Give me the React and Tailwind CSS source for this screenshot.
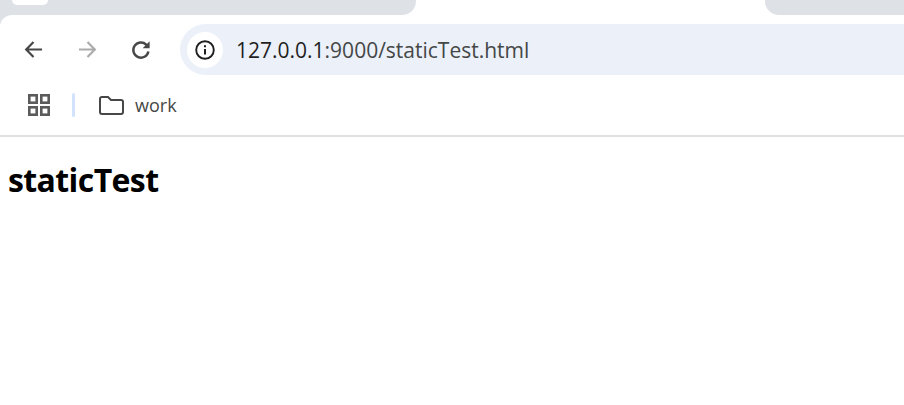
import React from "react";

function BackIcon({ className }) {
  return (
    <svg viewBox="0 0 20 20" className={className} fill="none" stroke="currentColor" strokeWidth="2.3">
      <path d="M19 10H2.5M10 2.2L2.3 10l7.7 7.8" />
    </svg>
  );
}

function ReloadIcon() {
  return (
    <svg viewBox="0 0 20 20" className="w-[20px] h-[20px] text-[#474747]" fill="none" stroke="currentColor" strokeWidth="2.4">
      <path d="M17.4 11.5A7.6 7.6 0 1 1 15.2 4.6L17.4 7" />
      <path d="M18.6 1.2V8.2h-7" fill="currentColor" stroke="none" />
    </svg>
  );
}

export default function App() {
  return (
    <div className="w-[904px] h-[405px] bg-white overflow-hidden font-['Open_Sans',sans-serif]">
      {/* tab strip */}
      <div className="h-[15px] flex justify-between">
        <div className="w-[416px] bg-[#dee1e6] rounded-br-[14px]">
          <div className="ml-[12px] w-[36px] h-[5px] bg-white rounded-b-[10px]" />
        </div>
        <div className="w-[139px] bg-[#dee1e6] rounded-bl-[14px]" />
      </div>

      {/* toolbar */}
      <div className="h-[70px] bg-[#dee1e6]">
        <div className="h-full bg-white rounded-tl-[12px] pt-[9px] flex items-start">
          <div className="h-[51px] w-[180px] flex items-center pl-[24px] shrink-0">
            <BackIcon className="w-[19px] h-[19px] text-[#474747]" />
            <BackIcon className="ml-[35px] w-[19px] h-[19px] text-[#ababab] rotate-180" />
            <div className="ml-[34px]">
              <ReloadIcon />
            </div>
          </div>
          <div className="h-[51px] flex-1 bg-[#ebf0f9] rounded-l-[26px] flex items-center pl-[7px]">
            <div className="w-[36px] h-[36px] rounded-full bg-white flex items-center justify-center shrink-0">
              <svg viewBox="0 0 20 20" className="w-[20px] h-[20px] text-[#1f1f1f]" fill="none" stroke="currentColor">
                <circle cx="10" cy="10" r="8.8" strokeWidth="1.9" />
                <path d="M10 9v5.5" strokeWidth="2" />
                <path d="M10 5.2v2" strokeWidth="2" />
              </svg>
            </div>
            <div className="ml-[13px] text-[21px] leading-[28px] text-[#444746] whitespace-nowrap">
              <span className="text-[#1f1f1f]">127.0.0.1</span>:9000/staticTest.html
            </div>
          </div>
        </div>
      </div>

      {/* bookmarks bar */}
      <div className="h-[52px] border-b-2 border-[#e0e0e0] flex items-start pl-[28px] pt-[8px]">
        <svg viewBox="0 0 22 22" className="mt-[1px] w-[22px] h-[22px] text-[#5b5b5b]" fill="none" stroke="currentColor" strokeWidth="2.6">
          <rect x="1.3" y="1.3" width="7.4" height="7.4" />
          <rect x="13.3" y="1.3" width="7.4" height="7.4" />
          <rect x="1.3" y="13.3" width="7.4" height="7.4" />
          <rect x="13.3" y="13.3" width="7.4" height="7.4" />
        </svg>
        <div className="ml-[22px] w-[3px] h-[24px] bg-[#d3e3fd] rounded-full" />
        <svg viewBox="0 0 25 19" className="ml-[24px] mt-[3px] w-[25px] h-[19px] text-[#474747]" fill="none" stroke="currentColor" strokeWidth="2">
          <path d="M1 3a2 2 0 0 1 2-2h6l3 3h10a2 2 0 0 1 2 2v10a2 2 0 0 1-2 2H3a2 2 0 0 1-2-2z" />
        </svg>
        <span className="ml-[11px] text-[18px] leading-[24px] text-[#444746]">work</span>
      </div>

      {/* page */}
      <h1 className="mt-[21px] ml-[8px] text-[32px] tracking-[-0.6px] leading-[44px] font-bold text-black">staticTest</h1>
    </div>
  );
}
